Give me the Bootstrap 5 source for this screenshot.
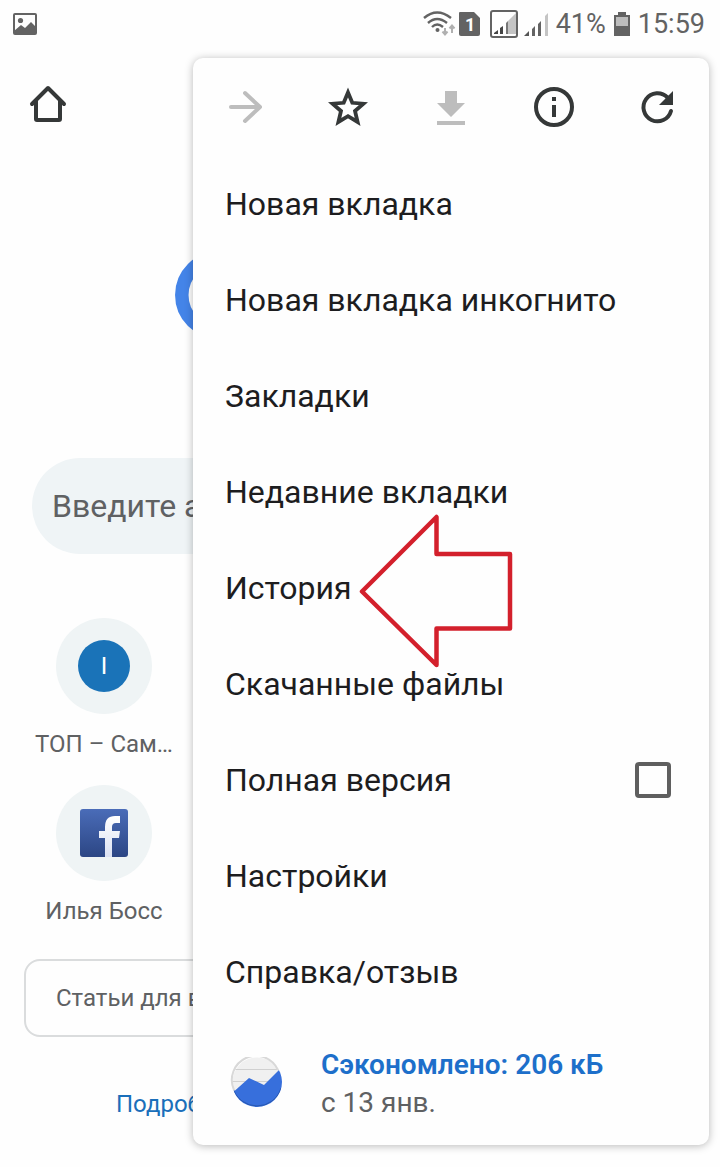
<!DOCTYPE html>
<html lang="ru">
<head>
<meta charset="utf-8">
<meta name="viewport" content="width=device-width, initial-scale=1">
<title>Новая вкладка</title>
<link rel="stylesheet" href="https://cdn.jsdelivr.net/npm/bootstrap@5.3.0/dist/css/bootstrap.min.css">
<style>
  body { font-family: Roboto, "Noto Sans", sans-serif; background: #fefefe; color: #5f6163; }
  svg { display: block; flex: none; }
  .screen { min-height: 100vh; }
  .status-bar { height: 48px; padding: 0 15px 0 12px; color: #636363; font-size: 27px; line-height: 32px; }
  .app-bar { height: 112px; padding: 0 28px; }
  .doodle { padding: 91px 0 0 175px; }
  .search-box { margin: 119px 32px 0; }
  .search-box input { height: 96px; padding: 0 20px; border: 0; border-radius: 48px; background: #eff4f6; font-size: 32px; color: #5f6163; }
  .search-box input::placeholder { color: #5f6163; }
  .tiles { margin: 64px 32px 0; gap: 25px; }
  .tile { width: 144px; gap: 14px; font-size: 24px; line-height: 32px; color: #5f6163; white-space: nowrap; }
  .tile-icon { width: 96px; height: 96px; background: #eff4f5; }
  .letter-icon { width: 52px; height: 52px; background: #1a73b8; color: #fff; font-size: 24px; }
  .feed { margin: 32px 24px 0; height: 78px; padding: 0 30px; border: 2px solid #dadcdd; border-radius: 16px; font-size: 24px; background: transparent; color: #5f6163; }
  .more { margin: 51px 0 0 116px; font-size: 24px; line-height: 32px; color: #1a6fba; }
  .menu { top: 58px; right: 11px; width: 516px; background: #fefefe; border-radius: 10px; box-shadow: 0 1px 8px rgba(0,0,0,.28); }
  .menu-icons { height: 98px; }
  .menu-icons button { color: #353838; }
  .menu-icons button:disabled { color: #bdbdbd; opacity: 1; }
  .menu-item { height: 96px; padding: 0 38px 0 32px; font-size: 32px; color: #1d1d1f; }
  .menu-item input[type=checkbox] { width: 36px; height: 36px; margin: 0; border: 4px solid #5f5f5f; border-radius: 4px; background: transparent; }
  .saver { height: 125px; padding: 3px 37px 0; gap: 37px; font-size: 28px; line-height: 38px; color: #5f6163; }
  .saver strong { font-weight: 600; color: #1d6fca; }
  .pointer { top: 514px; left: 358px; }
</style>
</head>
<body>
<div class="screen position-relative overflow-hidden">
  <header class="status-bar d-flex align-items-center justify-content-between">
    <svg width="26" height="24" viewBox="0 0 26 24"><rect x="2" y="2" width="22" height="20" rx="1" fill="none" stroke="#636363" stroke-width="2"/><circle cx="8.500" cy="8.500" r="2.600" fill="#636363"/><path d="M2 19l7-6 4 3 6-6 5 5v7H2z" fill="#636363"/></svg>
    <div class="d-flex align-items-center">
      <svg width="134" height="32" viewBox="0 0 134 32">
        <g fill="none" stroke="#636363" stroke-width="2.400"><path d="M2 10q13-11 27 0M6 15q9-8 19 0M10 19q5-5 11 0"/></g>
        <circle cx="15.500" cy="22" r="2" fill="#636363"/>
        <path d="M23 20v6M20.500 23.500l2.500 3 2.500-3M30 25v-7M27.500 20.500l2.500-3 2.500 3" fill="none" stroke="#b0b0b0" stroke-width="2"/>
        <path d="M38 4h14l6 6v16a2 2 0 0 1-2 2H39a2 2 0 0 1-2-2V5a1 1 0 0 1 1-1z" fill="#636363"/>
        <text x="43" y="23" font-size="18" font-weight="700" fill="#fff">1</text>
        <rect x="69" y="3" width="26" height="26" rx="2" fill="none" stroke="#636363" stroke-width="2"/>
        <path d="M72 26v-1l4-3v4z" fill="#444"/><path d="M78 20l3-2v8h-3z" fill="#444"/><path d="M84 15l2-2v13h-2z" fill="#777"/><path d="M86 13l8-8v21h-8z" fill="#c4c4c4"/>
        <path d="M102 28l5-5v5z" fill="#555"/><path d="M110 21l3-3v10h-3zM116 16l3-3v15h-3z" fill="#636363"/><path d="M123 8l3-3v23h-3z" fill="#c4c4c4"/>
      </svg>
      <span>41%</span>
      <svg class="mx-2" width="16" height="26" viewBox="0 0 16 26"><path d="M4 1h8v3h4v21H0V4h4z" fill="#636363"/><path d="M2 6h12v9H2z" fill="#bdbdbd"/></svg>
      <span>15:59</span>
    </div>
  </header>

  <main>
    <div class="app-bar d-flex align-items-center">
      <button type="button" class="btn p-0 border-0" aria-label="Главная"><svg width="40" height="40" viewBox="0 0 40 40"><path d="M4 20L20 4l16 16M8 17v18q0 1 1 1h22q1 0 1-1V17" fill="none" stroke="#353838" stroke-width="4" stroke-linecap="round" stroke-linejoin="round"/></svg></button>
    </div>
    <div class="doodle"><svg width="88" height="88" viewBox="0 0 88 88"><circle cx="44" cy="44" r="37.200" fill="none" stroke="#4484e8" stroke-width="13.500"/></svg></div>
    <div class="search-box"><input type="text" class="form-control" placeholder="Введите а" aria-label="Поиск"></div>
    <nav class="tiles d-flex flex-column">
      <a href="#" class="tile d-flex flex-column align-items-center text-decoration-none">
        <span class="tile-icon rounded-circle d-flex align-items-center justify-content-center"><span class="letter-icon rounded-circle d-flex align-items-center justify-content-center">I</span></span>
        <span>ТОП – Сам…</span>
      </a>
      <a href="#" class="tile d-flex flex-column align-items-center text-decoration-none">
        <span class="tile-icon rounded-circle d-flex align-items-center justify-content-center">
          <svg width="48" height="48" viewBox="0 0 48 48"><defs><linearGradient id="fb" x2="0" y2="1"><stop stop-color="#4a6cb8"/><stop offset="1" stop-color="#2c4684"/></linearGradient><linearGradient id="ff" x2="0" y2="1"><stop stop-color="#fff"/><stop offset="1" stop-color="#dbe1f2"/></linearGradient></defs><rect width="48" height="48" rx="3" fill="url(#fb)"/><path d="M25 48V29h-6v-7h6v-4q0-11 10-11h5v7h-4q-4 0-4 4v4h8l-1 7h-7v19z" fill="url(#ff)"/></svg>
        </span>
        <span>Илья Босс</span>
      </a>
    </nav>
    <div class="feed d-flex align-items-center">Статьи для в</div>
    <div class="more"><a href="#" class="text-decoration-none text-reset">Подроб</a></div>
  </main>

  <aside class="menu position-absolute">
    <div class="menu-icons d-flex align-items-center">
      <button type="button" disabled class="btn p-0 border-0 flex-fill d-flex justify-content-center" aria-label="Вперёд"><svg width="40" height="40" viewBox="0 0 40 40"><path d="M6 20h29M20 6l15 14-15 14" fill="none" stroke="currentColor" stroke-width="4" stroke-linecap="round" stroke-linejoin="round"/></svg></button>
      <button type="button" class="btn p-0 border-0 flex-fill d-flex justify-content-center" aria-label="В закладки"><svg width="40" height="40" viewBox="0 0 40 40"><path d="M20 5.500l4.300 10.300 11.200.9-8.500 7.300 2.600 11L20 29.200 10.400 35 13 24l-8.500-7.300 11.200-.9z" fill="none" stroke="currentColor" stroke-width="3.800"/></svg></button>
      <button type="button" disabled class="btn p-0 border-0 flex-fill d-flex justify-content-center" aria-label="Скачать"><svg width="40" height="40" viewBox="0 0 40 40"><path d="M14 4h12v12h8L20 30 6 16h8zM6 34h28v4H6z" fill="currentColor"/></svg></button>
      <button type="button" class="btn p-0 border-0 flex-fill d-flex justify-content-center" aria-label="О странице"><svg width="40" height="40" viewBox="0 0 40 40"><circle cx="20" cy="20" r="18" fill="none" stroke="currentColor" stroke-width="4"/><path d="M18 10h4v4h-4zM18 18h4v12h-4z" fill="currentColor"/></svg></button>
      <button type="button" class="btn p-0 border-0 flex-fill d-flex justify-content-center" aria-label="Обновить"><svg width="40" height="40" viewBox="0 0 40 40"><path d="M34 24A14 14 0 1 1 30.500 10.500" fill="none" stroke="currentColor" stroke-width="4" stroke-linecap="round"/><path d="M36 4v14H22z" fill="currentColor"/></svg></button>
    </div>
    <a href="#" class="menu-item d-flex align-items-center text-decoration-none">Новая вкладка</a>
    <a href="#" class="menu-item d-flex align-items-center text-decoration-none">Новая вкладка инкогнито</a>
    <a href="#" class="menu-item d-flex align-items-center text-decoration-none">Закладки</a>
    <a href="#" class="menu-item d-flex align-items-center text-decoration-none">Недавние вкладки</a>
    <a href="#" class="menu-item d-flex align-items-center text-decoration-none">История</a>
    <a href="#" class="menu-item d-flex align-items-center text-decoration-none">Скачанные файлы</a>
    <div class="menu-item d-flex align-items-center justify-content-between"><label for="desktop">Полная версия</label><input id="desktop" type="checkbox" class="form-check-input"></div>
    <a href="#" class="menu-item d-flex align-items-center text-decoration-none">Настройки</a>
    <a href="#" class="menu-item d-flex align-items-center text-decoration-none">Справка/отзыв</a>
    <a href="#" class="saver d-flex align-items-center text-decoration-none">
      <svg width="54" height="54" viewBox="0 0 54 54"><defs><clipPath id="disc"><circle cx="27" cy="25" r="25"/></clipPath></defs><circle cx="27" cy="25" r="24.500" fill="#f0f0f0"/><g clip-path="url(#disc)"><path d="M0 12.500h54M0 24.500h54" stroke="#d0d0d0"/><path d="M0 38l19-17 15 7 16-16 4 2v38H0z" fill="#376fdc"/><path d="M3 31a25 25 0 0 0 48 0" fill="none" stroke="#2857ae" stroke-width="1"/></g><path d="M4 33A24 24 0 0 1 48 13" fill="none" stroke="#d8d8d8" stroke-width="2"/></svg>
      <span class="d-flex flex-column"><strong>Сэкономлено: 206 кБ</strong><span>с 13 янв.</span></span>
    </a>
  </aside>

  <svg class="pointer position-absolute pe-none" width="156" height="154" viewBox="0 0 156 154" aria-hidden="true"><path d="M4 77.500L78.500 3v37H152v74.500H78.500V151z" fill="none" stroke="#d3202c" stroke-width="4.500" stroke-linejoin="round"/></svg>
</div>
<script src="https://cdn.jsdelivr.net/npm/bootstrap@5.3.0/dist/js/bootstrap.bundle.min.js"></script>
</body>
</html>
